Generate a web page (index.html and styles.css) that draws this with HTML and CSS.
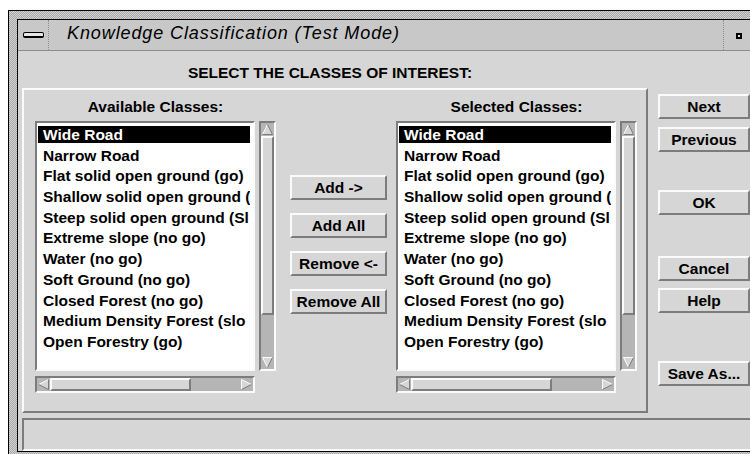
FILE: index.html
```html
<!DOCTYPE html>
<html lang="en">
<head>
    <meta charset="UTF-8">
    <meta name="viewport" content="width=device-width, initial-scale=1.0">
    <title>Knowledge Classification (Test Mode)</title>
    <link rel="stylesheet" href="styles.css">
</head>
<body>
    <div class="window">
        <div class="client">
            <div class="titlebar">
                <div class="menu-btn"><span class="menu-bar"></span></div>
                <div class="title">Knowledge Classification (Test Mode)</div>
                <div class="min-btn"><span class="min-dot"></span></div>
            </div>

            <div class="content">
                <div class="heading">SELECT THE CLASSES OF INTEREST:</div>

                <div class="main">
                    <div class="panel">
                        <!-- left list -->
                        <div class="column">
                            <div class="col-label">Available Classes:</div>
                            <div class="list-row">
                                <ul class="list">
                                    <li class="selected">Wide Road</li>
                                    <li>Narrow Road</li>
                                    <li>Flat solid open ground (go)</li>
                                    <li>Shallow solid open ground (</li>
                                    <li>Steep solid open ground (Sl</li>
                                    <li>Extreme slope (no go)</li>
                                    <li>Water (no go)</li>
                                    <li>Soft Ground (no go)</li>
                                    <li>Closed Forest (no go)</li>
                                    <li>Medium Density Forest (slo</li>
                                    <li>Open Forestry (go)</li>
                                </ul>
                                <div class="vscroll">
                                    <svg class="arrow" viewBox="0 0 13 13"><polygon class="arr-fill" points="6.5,1.5 11.5,11.5 1.5,11.5"/><path class="arr-lt" d="M1.5 11.5 L6.5 1.5"/><path class="arr-dk" d="M6.5 1.5 L11.5 11.5 H1.5"/></svg>
                                    <div class="thumb"></div>
                                    <div class="track"></div>
                                    <svg class="arrow" viewBox="0 0 13 13"><polygon class="arr-fill" points="1.5,1.5 11.5,1.5 6.5,11.5"/><path class="arr-lt" d="M6.5 11.5 L1.5 1.5 H11.5"/><path class="arr-dk" d="M11.5 1.5 L6.5 11.5"/></svg>
                                </div>
                            </div>
                            <div class="hscroll">
                                <svg class="arrow" viewBox="0 0 13 13"><polygon class="arr-fill" points="1.5,6.5 11.5,1.5 11.5,11.5"/><path class="arr-lt" d="M1.5 6.5 L11.5 1.5"/><path class="arr-dk" d="M1.5 6.5 L11.5 11.5 V1.5"/></svg>
                                <div class="thumb"></div>
                                <div class="track"></div>
                                <svg class="arrow" viewBox="0 0 13 13"><polygon class="arr-fill" points="1.5,1.5 11.5,6.5 1.5,11.5"/><path class="arr-lt" d="M1.5 11.5 V1.5 L11.5 6.5"/><path class="arr-dk" d="M11.5 6.5 L1.5 11.5"/></svg>
                            </div>
                        </div>

                        <div class="mid-buttons">
                            <button class="btn">Add -&gt;</button>
                            <button class="btn">Add All</button>
                            <button class="btn">Remove &lt;-</button>
                            <button class="btn">Remove All</button>
                        </div>

                        <!-- right list -->
                        <div class="column">
                            <div class="col-label">Selected Classes:</div>
                            <div class="list-row">
                                <ul class="list">
                                    <li class="selected">Wide Road</li>
                                    <li>Narrow Road</li>
                                    <li>Flat solid open ground (go)</li>
                                    <li>Shallow solid open ground (</li>
                                    <li>Steep solid open ground (Sl</li>
                                    <li>Extreme slope (no go)</li>
                                    <li>Water (no go)</li>
                                    <li>Soft Ground (no go)</li>
                                    <li>Closed Forest (no go)</li>
                                    <li>Medium Density Forest (slo</li>
                                    <li>Open Forestry (go)</li>
                                </ul>
                                <div class="vscroll">
                                    <svg class="arrow" viewBox="0 0 13 13"><polygon class="arr-fill" points="6.5,1.5 11.5,11.5 1.5,11.5"/><path class="arr-lt" d="M1.5 11.5 L6.5 1.5"/><path class="arr-dk" d="M6.5 1.5 L11.5 11.5 H1.5"/></svg>
                                    <div class="thumb"></div>
                                    <div class="track"></div>
                                    <svg class="arrow" viewBox="0 0 13 13"><polygon class="arr-fill" points="1.5,1.5 11.5,1.5 6.5,11.5"/><path class="arr-lt" d="M6.5 11.5 L1.5 1.5 H11.5"/><path class="arr-dk" d="M11.5 1.5 L6.5 11.5"/></svg>
                                </div>
                            </div>
                            <div class="hscroll">
                                <svg class="arrow" viewBox="0 0 13 13"><polygon class="arr-fill" points="1.5,6.5 11.5,1.5 11.5,11.5"/><path class="arr-lt" d="M1.5 6.5 L11.5 1.5"/><path class="arr-dk" d="M1.5 6.5 L11.5 11.5 V1.5"/></svg>
                                <div class="thumb"></div>
                                <div class="track"></div>
                                <svg class="arrow" viewBox="0 0 13 13"><polygon class="arr-fill" points="1.5,1.5 11.5,6.5 1.5,11.5"/><path class="arr-lt" d="M1.5 11.5 V1.5 L11.5 6.5"/><path class="arr-dk" d="M11.5 6.5 L1.5 11.5"/></svg>
                            </div>
                        </div>
                    </div>

                    <div class="side-buttons">
                        <button class="btn">Next</button>
                        <button class="btn btn-prev">Previous</button>
                        <button class="btn btn-ok">OK</button>
                        <button class="btn btn-cancel">Cancel</button>
                        <button class="btn btn-help">Help</button>
                        <button class="btn btn-save">Save As...</button>
                    </div>
                </div>

                <div class="status"></div>
            </div>
        </div>
    </div>
</body>
</html>
```

FILE: styles.css
```css
:root {
    --bg: #d5d6d5;
    --title-bg: #c7c8c7;
    --light: #fbfbfb;
    --dark: #7b7c7b;
    --trough: #b4b5b4;
    --ui-font: "Liberation Sans", Arial, sans-serif;
}

html, body {
    margin: 0;
    padding: 0;
}

body {
    width: 750px;
    height: 454px;
    overflow: hidden;
    background: #fff;
    font-family: var(--ui-font);
    font-size: 15.5px;
    font-weight: bold;
    color: #000;
}

/* window manager frame */
.window {
    margin: 10px 0 0 8px;
    width: fit-content;
    border: 1px solid #000;
    padding: 8px;
    background: repeating-conic-gradient(#a6a7a6 0 25%, #d2d3d2 0 50%) 0 0 / 2px 2px;
}

.client {
    width: 742px;
    border: 1px solid #000;
    background: var(--bg);
}

.titlebar {
    display: flex;
    height: 30px;
    background: var(--title-bg);
    border-bottom: 1px solid #8c8d8c;
}

.menu-btn {
    width: 30px;
    border-right: 1px dotted #8c8d8c;
    display: flex;
    align-items: center;
    justify-content: center;
}

.menu-bar {
    width: 19px;
    height: 3px;
    border: 1px solid #000;
    border-bottom-width: 2px;
    border-radius: 2px;
    background: #e6e6e6;
}

.title {
    flex: 1;
    padding-left: 18px;
    font-size: 18px;
    font-weight: normal;
    font-style: italic;
    line-height: 26px;
    letter-spacing: 0.9px;
}

.min-btn {
    width: 24px;
    padding-left: 12px;
    border-left: 1px dotted #8c8d8c;
    display: flex;
    align-items: center;
}

.min-dot {
    width: 2px;
    height: 2px;
    border: 2px solid #000;
    background: #e6e6e6;
    margin-top: 1px;
}

/* dialog body */
.content {
    padding: 13px 0 0 4px;
}

.heading {
    width: 616px;
    padding-right: 10px;
    text-align: center;
    line-height: 18px;
}

.main {
    display: flex;
    align-items: flex-start;
    gap: 10px;
    margin-top: 6px;
}

.panel {
    width: 626px;
    box-sizing: border-box;
    display: flex;
    align-items: flex-start;
    padding: 8px 9px 18px 11px;
    border: 2px solid;
    border-color: var(--light) var(--dark) var(--dark) var(--light);
}

.column {
    width: 241px;
    display: flex;
    flex-direction: column;
}

.col-label {
    text-align: center;
    line-height: 18px;
}

.list-row {
    display: flex;
    gap: 4px;
    margin-top: 5px;
}

.list {
    width: 220px;
    height: 250px;
    box-sizing: border-box;
    margin: 0;
    padding: 3px 3px 0 1px;
    list-style: none;
    background: #fff;
    border: 2px solid;
    border-color: var(--dark) var(--light) var(--light) var(--dark);
    display: flex;
    flex-direction: column;
    gap: 3.7px;
}

.list li {
    height: 17px;
    line-height: 17px;
    padding-left: 5px;
    white-space: nowrap;
    overflow: hidden;
}

.list li.selected {
    background: #000;
    color: #fff;
}

/* scrollbars */
.vscroll, .hscroll {
    box-sizing: border-box;
    display: flex;
    background: var(--trough);
    border: 2px solid;
    border-color: var(--dark) var(--light) var(--light) var(--dark);
}

.vscroll {
    width: 17px;
    height: 250px;
    flex-direction: column;
}

.hscroll {
    width: 220px;
    height: 17px;
    margin-top: 5px;
}

.arrow {
    display: block;
    flex: none;
    width: 13px;
    height: 13px;
}

.arr-fill { fill: var(--bg); }
.arr-lt { fill: none; stroke: var(--light); }
.arr-dk { fill: none; stroke: var(--dark); }

.thumb {
    flex: none;
    box-sizing: border-box;
    background: var(--bg);
    border: 2px solid;
    border-color: var(--light) var(--dark) var(--dark) var(--light);
}

.vscroll .thumb { height: 179px; }
.hscroll .thumb { width: 141px; }

.track { flex: 1; }

/* push buttons */
.btn {
    display: block;
    height: 25px;
    box-sizing: border-box;
    padding: 0;
    margin: 0;
    background: var(--bg);
    border: 2px solid;
    border-color: var(--light) var(--dark) var(--dark) var(--light);
    font-family: var(--ui-font);
    font-size: 15.5px;
    font-weight: bold;
    line-height: 21px;
    color: #000;
    text-align: center;
}

.mid-buttons {
    width: 97px;
    display: flex;
    flex-direction: column;
    gap: 13px;
    margin: 77px 9px 0 14px;
}

.mid-buttons .btn { width: 97px; }

.side-buttons {
    width: 92px;
    display: flex;
    flex-direction: column;
    padding-top: 6px;
}

.side-buttons .btn { width: 92px; }
.btn-prev { margin-top: 8px; }
.btn-ok { margin-top: 38px; }
.btn-cancel { margin-top: 41px; }
.btn-help { margin-top: 7px; }
.btn-save { margin-top: 48px; }

/* message area */
.status {
    height: 33px;
    box-sizing: border-box;
    margin-top: 5px;
    border: 2px solid;
    border-color: var(--dark) var(--light) var(--light) var(--dark);
}
```
